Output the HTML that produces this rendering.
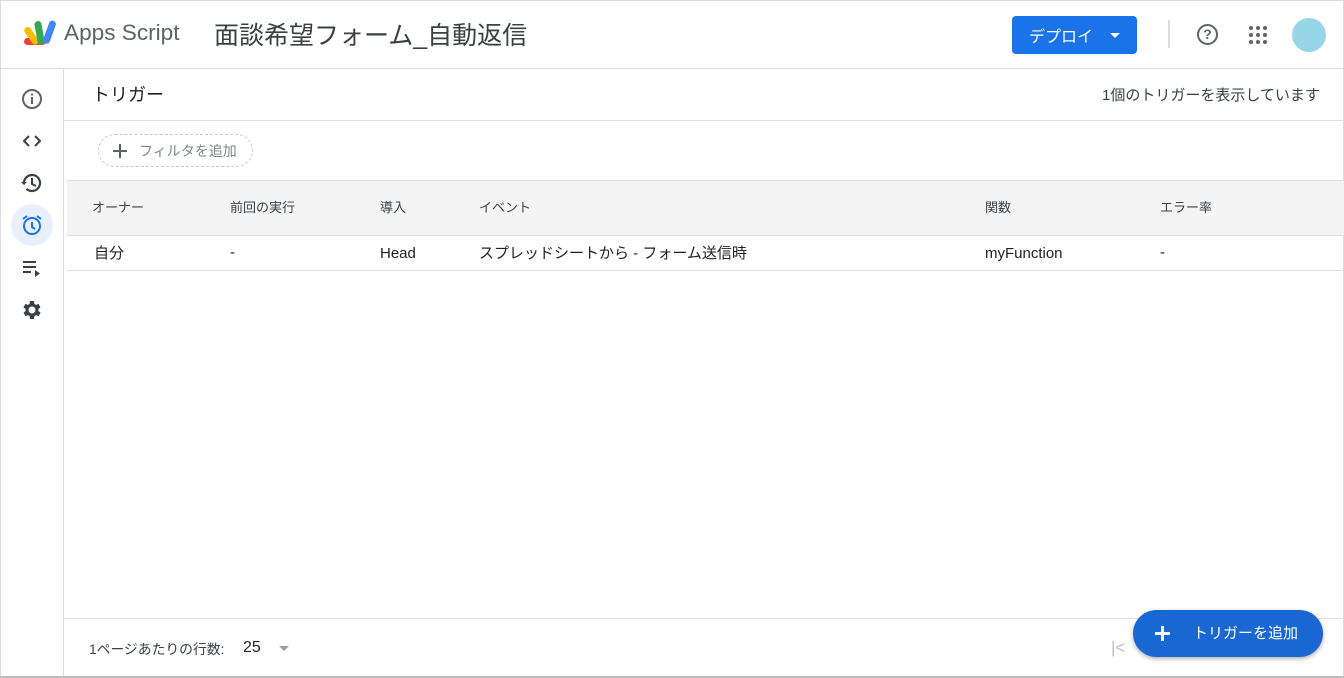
<!DOCTYPE html>
<html><head><meta charset="utf-8"><style>
*{box-sizing:border-box;margin:0;padding:0}
body{width:1344px;height:678px;overflow:hidden;background:#fff;font-family:"Liberation Sans","Noto Sans CJK JP",sans-serif;color:#202124;position:relative}
.abs{position:absolute}
.t{white-space:nowrap}
</style></head><body>
<div class="abs" style="left:0;top:0;width:1344px;height:1px;background:#dadce0"></div>
<div class="abs" style="left:0;top:68px;width:1344px;height:1px;background:#dadce0"></div>
<div class="abs" style="left:63px;top:69px;width:1px;height:609px;background:#dadce0"></div>
<div class="abs" style="left:0;top:0;width:1px;height:678px;background:#dadce0"></div>
<div class="abs" style="left:1343px;top:0;width:1px;height:678px;background:#dadce0"></div>
<div class="abs" style="left:0;top:676px;width:1344px;height:2px;background:#bdbdbd"></div>
<svg class="abs" style="left:22px;top:18px" width="36" height="30" viewBox="0 0 36 30">
<rect x="2" y="20" width="22" height="7" rx="3.5" fill="#ea4335"/>
<rect x="6" y="8" width="7" height="20" rx="3.5" transform="rotate(-35 9 18)" fill="#fbbc04"/>
<rect x="14" y="3" width="7" height="24" rx="3.5" transform="rotate(-10 17 15)" fill="#34a853"/>
<rect x="24" y="2" width="7" height="24" rx="3.5" transform="rotate(20 27 14)" fill="#4285f4"/>
</svg>
<div class="abs t" style="left:64px;top:20px;font-size:22.6px;color:#5f6368">Apps Script</div>
<div class="abs t" style="left:214px;top:16px;font-size:25px;color:#3c4043">面談希望フォーム_自動返信</div>
<div class="abs" style="left:1012px;top:16px;width:125px;height:38px;background:#1a73e8;border-radius:4px"></div>
<div class="abs t" style="left:1029px;top:23px;font-size:16px;color:#fff">デプロイ</div>
<div class="abs" style="left:1110px;top:33px;border-left:5px solid transparent;border-right:5px solid transparent;border-top:5px solid #fff"></div>
<div class="abs" style="left:1168px;top:20px;width:2px;height:28px;background:#dadce0"></div>
<div class="abs" style="left:1197px;top:24px;width:21px;height:21px;border:2px solid #5f6368;border-radius:50%;font-size:14px;font-weight:bold;text-align:center;line-height:17px;color:#5f6368">?</div>
<svg class="abs" style="left:1249px;top:26px" width="18" height="18"><g fill="#5f6368"><circle cx="2" cy="2" r="2"/><circle cx="9" cy="2" r="2"/><circle cx="16" cy="2" r="2"/><circle cx="2" cy="9" r="2"/><circle cx="9" cy="9" r="2"/><circle cx="16" cy="9" r="2"/><circle cx="2" cy="16" r="2"/><circle cx="9" cy="16" r="2"/><circle cx="16" cy="16" r="2"/></g></svg>
<div class="abs" style="left:1292px;top:18px;width:34px;height:34px;border-radius:50%;background:#96d6e8"></div>
<svg class="abs" style="left:20px;top:87px" width="24" height="24" viewBox="0 0 24 24"><circle cx="12" cy="12" r="9" fill="none" stroke="#5f6368" stroke-width="2"/><rect x="11" y="10" width="2" height="7" fill="#5f6368"/><rect x="11" y="6.5" width="2" height="2" fill="#5f6368"/></svg>
<svg class="abs" style="left:20px;top:129px" width="24" height="24" viewBox="0 0 24 24"><path d="M9 7l-5 5 5 5M15 7l5 5-5 5" fill="none" stroke="#3c4043" stroke-width="2"/></svg>
<svg class="abs" style="left:20px;top:171px" width="24" height="24" viewBox="0 0 24 24"><path d="M4 12a8 8 0 1 1 2.5 5.8" fill="none" stroke="#3c4043" stroke-width="2.2"/><path d="M1 11h6l-3 3z" fill="#3c4043"/><path d="M12 7v6l4 2" fill="none" stroke="#3c4043" stroke-width="2"/></svg>
<div class="abs" style="left:11px;top:204px;width:42px;height:42px;border-radius:50%;background:#e8f0fe"></div>
<svg class="abs" style="left:20px;top:213px" width="24" height="24" viewBox="0 0 24 24"><circle cx="12" cy="13" r="8" fill="none" stroke="#1a73e8" stroke-width="2"/><path d="M12 9v5l3 2M3 6l4-3M21 6l-4-3" fill="none" stroke="#1a73e8" stroke-width="2"/></svg>
<svg class="abs" style="left:20px;top:256px" width="24" height="24" viewBox="0 0 24 24"><path d="M3 6h13M3 11h13M3 16h8" stroke="#3c4043" stroke-width="2"/><path d="M15 14v7l5-3.5z" fill="#3c4043"/></svg>
<svg class="abs" style="left:20px;top:298px" width="24" height="24" viewBox="0 0 24 24"><path fill="#3c4043" d="M19.4 13a7.5 7.5 0 0 0 0-2l2.1-1.6-2-3.5-2.5 1a7 7 0 0 0-1.7-1L15 3h-4l-.4 2.9a7 7 0 0 0-1.7 1l-2.5-1-2 3.5L6.6 11a7.5 7.5 0 0 0 0 2l-2.1 1.6 2 3.5 2.5-1a7 7 0 0 0 1.7 1L11 21h4l.4-2.9a7 7 0 0 0 1.7-1l2.5 1 2-3.5zM13 15.5a3.5 3.5 0 1 1 0-7 3.5 3.5 0 0 1 0 7z" transform="translate(-1 0)"/><circle cx="12" cy="12" r="1.8" fill="#fff"/></svg>
<div class="abs t" style="left:92px;top:81px;font-size:18px">トリガー</div>
<div class="abs t" style="left:1102px;top:84px;font-size:15px;color:#3c4043">1個のトリガーを表示しています</div>
<div class="abs" style="left:64px;top:120px;width:1280px;height:1px;background:#e0e0e0"></div>
<div class="abs" style="left:98px;top:134px;width:155px;height:33px;border:1px dashed #c8c8c8;border-radius:17px"></div>
<svg class="abs" style="left:112px;top:143px" width="16" height="16"><path d="M8 1v14M1 8h14" stroke="#5f6368" stroke-width="2"/></svg>
<div class="abs t" style="left:139px;top:141px;font-size:14px;color:#80868b">フィルタを追加</div>
<div class="abs" style="left:67px;top:180px;width:1277px;height:56px;background:#f4f4f4;border-top:1px solid #e0e0e0;border-bottom:1px solid #e0e0e0"></div>
<div class="abs t" style="top:197px;left:92px;font-size:13px;color:#3c4043">オーナー</div>
<div class="abs t" style="top:197px;left:230px;font-size:13px;color:#3c4043">前回の実行</div>
<div class="abs t" style="top:197px;left:380px;font-size:13px;color:#3c4043">導入</div>
<div class="abs t" style="top:197px;left:479px;font-size:13px;color:#3c4043">イベント</div>
<div class="abs t" style="top:197px;left:985px;font-size:13px;color:#3c4043">関数</div>
<div class="abs t" style="top:197px;left:1160px;font-size:13px;color:#3c4043">エラー率</div>
<div class="abs t" style="top:242px;left:94px;font-size:15px">自分</div>
<div class="abs t" style="top:244px;left:230px;font-size:15px">-</div>
<div class="abs t" style="top:245px;left:380px;font-size:15px">Head</div>
<div class="abs t" style="top:242px;left:479px;font-size:15px">スプレッドシートから - フォーム送信時</div>
<div class="abs t" style="top:245px;left:985px;font-size:15px">myFunction</div>
<div class="abs t" style="top:244px;left:1160px;font-size:15px">-</div>
<div class="abs" style="left:67px;top:270px;width:1277px;height:1px;background:#e0e0e0"></div>
<div class="abs" style="left:64px;top:618px;width:1280px;height:1px;background:#e0e0e0"></div>
<div class="abs t" style="top:638px;left:89px;font-size:13.8px;color:#3c4043">1ページあたりの行数:</div>
<div class="abs t" style="top:639px;left:243px;font-size:16px">25</div>
<div class="abs" style="left:279px;top:646px;border-left:5px solid transparent;border-right:5px solid transparent;border-top:5px solid #9e9e9e"></div>
<div class="abs t" style="top:638px;left:1111px;font-size:17px;color:#bdbdbd">|&lt;</div>
<div class="abs" style="left:1133px;top:610px;width:190px;height:47px;border-radius:24px;background:#1967d2;box-shadow:0 2px 4px rgba(0,0,0,.3)"></div>
<svg class="abs" style="left:1154px;top:625px" width="17" height="17"><path d="M8.5 1v15M1 8.5h15" stroke="#fff" stroke-width="3"/></svg>
<div class="abs t" style="left:1193px;top:622px;font-size:15px;color:#fff">トリガーを追加</div>
</body></html>
